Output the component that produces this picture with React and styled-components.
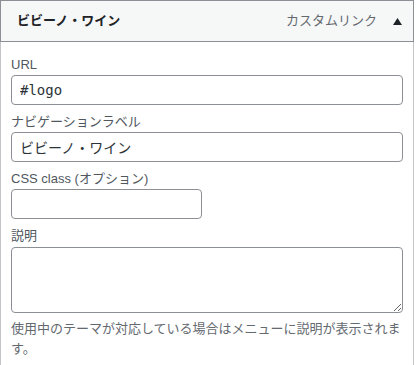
import styled, { createGlobalStyle } from "styled-components"

const GlobalStyle = createGlobalStyle`
  * { box-sizing: border-box; }
  body {
    margin: 0;
    background: #ffffff;
    font-family: "Liberation Sans", "Noto Sans CJK JP", sans-serif;
    color: #3c434a;
  }
`

const sans = `"Liberation Sans", "Noto Sans CJK JP", sans-serif`

const MenuItem = styled.div`
  width: 414px;
`

const Handle = styled.div`
  display: flex;
  align-items: center;
  height: 42px;
  padding: 0 4px 0 16px;
  background: #f6f7f7;
  border: 1px solid #8c8f94;
`

const ItemTitle = styled.span`
  flex: 1;
  font-size: 13px;
  font-weight: 700;
  line-height: 20px;
  color: #1d2327;
`

const ItemType = styled.span`
  font-size: 13px;
  line-height: 20px;
  color: #646970;
  margin-right: 8px;
`

const Toggle = styled.button`
  width: 24px;
  height: 30px;
  padding: 0;
  border: none;
  background: none;
  display: flex;
  align-items: center;
  justify-content: center;
`

const Settings = styled.div`
  padding: 13px 10px 10px;
  border: 1px solid #c3c4c7;
  border-top: none;
`

const Field = styled.div`
  margin-bottom: 7px;
`

const Label = styled.label`
  display: block;
  font-size: 13px;
  line-height: 20px;
  color: #50575e;
`

const TextInput = styled.input`
  display: block;
  width: ${p => p.$narrow ? "191px" : "100%"};
  height: 30px;
  margin: 0;
  padding: 0 8px;
  border: 1px solid #8c8f94;
  border-radius: 4px;
  background: #fff;
  color: #2c3338;
  font-size: 14px;
  font-family: ${p => p.$code ? `"DejaVu Sans Mono", monospace` : sans};
  outline: none;
`

const TextArea = styled.textarea`
  display: block;
  width: 100%;
  height: 66px;
  margin: 1px 0 0;
  padding: 2px 8px;
  border: 1px solid #8c8f94;
  border-radius: 4px;
  background: #fff;
  color: #2c3338;
  font-size: 14px;
  font-family: ${sans};
  outline: none;
`

const Help = styled.p`
  margin: 6px 0 0;
  font-size: 13px;
  line-height: 20px;
  color: #646970;
`

function App() {
  return (
    <>
      <GlobalStyle />
      <MenuItem>
        <Handle>
          <ItemTitle>ビビーノ・ワイン</ItemTitle>
          <ItemType>カスタムリンク</ItemType>
          <Toggle aria-label="toggle">
            <svg width="9" height="7" viewBox="0 0 9 7">
              <polygon points="4.5,0 9,7 0,7" fill="#1d2327" />
            </svg>
          </Toggle>
        </Handle>
        <Settings>
          <Field>
            <Label>URL</Label>
            <TextInput $code defaultValue="#logo" />
          </Field>
          <Field>
            <Label>ナビゲーションラベル</Label>
            <TextInput defaultValue="ビビーノ・ワイン" />
          </Field>
          <Field>
            <Label>CSS class (オプション)</Label>
            <TextInput $narrow defaultValue="" />
          </Field>
          <div>
            <Label>説明</Label>
            <TextArea defaultValue="" />
            <Help>使用中のテーマが対応している場合はメニューに説明が表示されます。</Help>
          </div>
        </Settings>
      </MenuItem>
    </>
  )
}

export default App
